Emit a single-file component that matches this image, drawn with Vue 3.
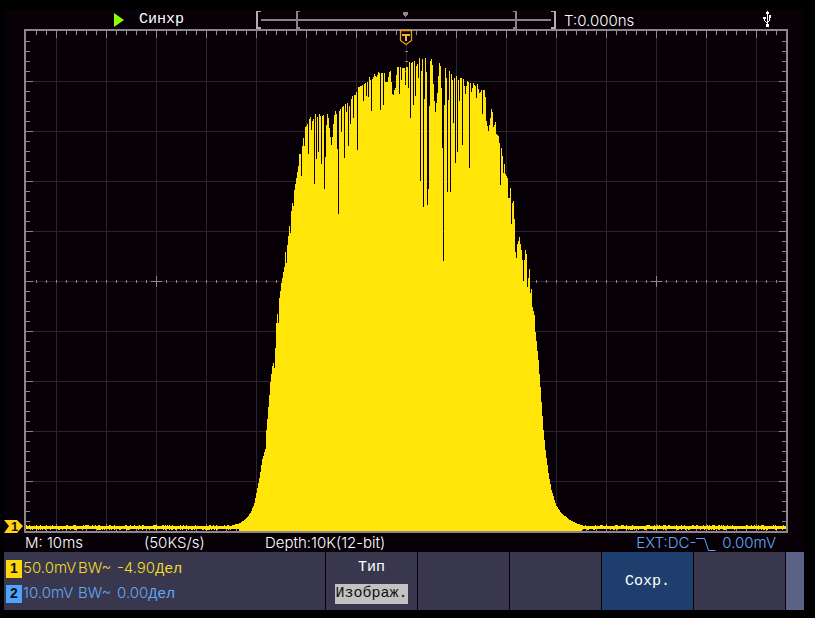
<script setup>
const envelope = [
  [232, 525], [240, 523], [246, 518], [250, 513], [254, 503], [257, 488], [259, 478], [262, 459], [265, 449],
  [266, 430], [268, 407], [270, 382], [272, 366], [273, 363], [275, 348], [276, 323], [277, 314], [279, 298],
  [281, 283], [284, 267], [285, 252], [287, 245], [289, 226], [290, 219], [292, 203], [294, 190], [296, 178],
  [298, 166], [299, 154], [301, 154], [303, 138], [305, 127], [307, 124], [310, 117], [312, 121], [315, 114],
  [317, 117], [319, 114], [321, 117], [323, 115], [324, 150], [325, 157], [326, 125], [327, 114], [328, 118],
  [330, 137], [331, 145], [332, 137], [333, 124], [334, 115], [335, 111], [337, 116], [340, 109], [343, 106],
  [345, 104], [346, 112], [347, 103], [349, 106], [352, 96], [355, 95], [358, 87], [362, 85], [365, 83],
  [367, 82], [369, 77], [371, 82], [374, 74], [376, 77], [378, 72], [380, 73], [382, 73], [384, 73], [385, 82],
  [387, 82], [389, 72], [390, 71], [391, 82], [392, 94], [394, 90], [395, 88], [396, 75], [397, 67], [400, 67],
  [403, 68], [407, 67], [409, 62], [411, 63], [414, 61], [416, 66], [417, 64], [419, 58], [421, 71], [422, 59],
  [424, 99], [425, 58], [426, 72], [429, 106], [430, 61], [431, 59], [432, 65], [433, 84], [434, 101],
  [435, 112], [436, 103], [437, 93], [438, 76], [439, 63], [440, 66], [441, 88], [442, 148], [444, 105],
  [445, 68], [446, 78], [448, 100], [449, 71], [451, 74], [452, 80], [454, 78], [456, 76], [458, 80], [460, 78],
  [463, 79], [464, 86], [465, 94], [466, 86], [467, 81], [470, 83], [471, 92], [473, 83], [475, 86], [476, 98],
  [477, 84], [479, 93], [481, 90], [484, 90], [485, 97], [486, 121], [488, 131], [490, 118], [491, 109],
  [492, 112], [493, 127], [495, 122], [496, 134], [498, 136], [499, 143], [501, 148], [502, 156], [503, 173],
  [504, 164], [505, 174], [507, 178], [508, 198], [509, 198], [510, 188], [512, 203], [513, 201], [514, 219],
  [515, 252], [516, 258], [517, 244], [519, 237], [521, 250], [522, 260], [523, 281], [524, 260], [525, 250],
  [526, 254], [527, 287], [528, 278], [529, 269], [530, 293], [531, 289], [532, 307], [534, 315], [535, 332],
  [538, 360], [540, 387], [541, 402], [543, 430], [545, 450], [548, 473], [551, 490], [556, 506], [561, 513],
  [568, 519], [578, 524], [584, 526]
]

const dropouts = {
  274: 368, 278: 323, 286: 263, 290: 233, 293: 206, 301: 176, 304: 146, 308: 154, 311: 130, 314: 184, 316: 159,
  318: 152, 321: 164, 324: 189, 337: 149, 338: 214, 341: 132, 344: 158, 348: 146, 350: 124, 353: 118, 357: 150,
  363: 101, 366: 96, 368: 97, 371: 111, 380: 110, 383: 105, 393: 95, 399: 94, 401: 80, 405: 85, 408: 88,
  410: 118, 413: 105, 415: 96, 418: 78, 420: 181, 423: 207, 427: 205, 428: 189, 443: 261, 447: 192, 450: 192,
  453: 123, 455: 163, 457: 152, 459: 101, 462: 145, 469: 168, 482: 114, 500: 185, 511: 224
}

function topAt(x) {
  if (dropouts[x]) return dropouts[x]
  for (let i = 1; i < envelope.length; i++) {
    const [x1, y1] = envelope[i]
    if (x <= x1) {
      const [x0, y0] = envelope[i - 1]
      return Math.round(y0 + ((y1 - y0) * (x - x0)) / (x1 - x0))
    }
  }
  return 526
}

let seed = 7
function noise() {
  seed = (seed * 16807) % 2147483647
  return seed / 2147483647
}

let wave = ''
for (let x = 26; x < 786; x++) {
  const burst = noise() > 0.75 ? 1 : 0
  const lift = noise() > 0.75 ? 1 : 0
  let top = 526 - lift
  let bottom = 529 + burst
  if (x >= 232 && x <= 584) {
    top = Math.min(topAt(x), top)
    bottom = x > 238 && x < 582 ? 531 : bottom
  }
  wave += `M${x} ${top}h1V${bottom}h-1z`
}

const vLines = Array.from({ length: 15 }, (_, i) => 56 + i * 50)
const hLines = Array.from({ length: 9 }, (_, i) => 81 + i * 50)
const grid = vLines.map(x => `M${x} 31h1v500h-1z`).join('') + hLines.map(y => `M26 ${y}h760v1h-760z`).join('')

let ticks = ''
for (let x = 36; x < 786; x += 10) {
  const len = (x - 56) % 50 === 0 ? 7 : 4
  ticks += `M${x} 31h1v${len}h-1zM${x} ${531 - len}h1v${len}h-1zM${x} 280h1v3h-1z`
}
for (let y = 41; y < 531; y += 10) {
  const len = (y - 31) % 50 === 0 ? 7 : 4
  ticks += `M26 ${y}h${len}v1h-${len}zM${786 - len} ${y}h${len}v1h-${len}zM405 ${y}h3v1h-3z`
}
ticks += 'M151 281h11v1h-11zM156 276h1v11h-1zM651 281h11v1h-11zM656 276h1v11h-1z'

const channels = [
  { id: 1, tone: 'yellow', scale: '50.0mV', offset: '-4.90' },
  { id: 2, tone: 'blue', scale: '10.0mV', offset: '0.00' }
]
</script>

<template>
  <div class="device">
    <main class="screen">
      <header class="topbar">
        <div class="status">
          <svg class="play" viewBox="0 0 10 14" aria-hidden="true"><path d="M0 0L10 7L0 14z" fill="#8cff00" /></svg>
          <span class="cyr">Синхр</span>
        </div>
        <svg class="memory" viewBox="256 10 300 19" aria-hidden="true" shape-rendering="crispEdges">
          <path d="M261 19h290v2h-290z" fill="#8a8289" />
          <path d="M296 11h4v1h-2v15h2v2h-4zM513 11h4v18h-4v-2h2v-15h-2z" fill="#8a8289" />
          <path d="M256 11h5v1h-3v15h3v2h-5zM556 11h-5v1h3v15h-3v2h5z" fill="#b4aeb4" />
          <path d="M403 12h5v3h-1v1h-1v1h-1v-1h-1v-1h-1z" fill="#8f888f" />
        </svg>
        <span class="time">T:0.000ns</span>
        <svg class="usb" viewBox="0 0 9 16" aria-hidden="true" shape-rendering="crispEdges">
          <path d="M4 0h1v1h1v2h-1v10h1v3h-3v-3h1v-10h-1v-2h1zM1 6h2v2h-1v2h1v1h1v1h-1v-1h-1v-1h-1v-2h-1v-2zM6 4h2v3h-1v3h-1v1h-1v-1h1v-3h0z" fill="#fff" />
        </svg>
      </header>

      <svg class="plot" viewBox="4 29 800 504" role="img" aria-label="CH1">
        <g shape-rendering="crispEdges">
          <path :d="grid" fill="#2b262c" />
          <path :d="ticks" fill="#8f898f" />
          <path d="M24 29h764v504h-764zM26 31v500h760v-500z" fill="#8d858c" fill-rule="evenodd" />
          <path :d="wave" fill="#ffe608" />
        </g>
        <path d="M400.500 30.500h11v10l-5.500 4l-5.500 -4z" fill="#080008" stroke="#e8a21c" stroke-width="1.300" />
        <path d="M402 34h8v2h-3v5h-2v-5h-3z" fill="#f2b42c" shape-rendering="crispEdges" />
        <path d="M4 520h13l6 6l-6 7h-13l5 -7z" fill="#ffd21c" />
        <text class="marker" x="11" y="531">1</text>
      </svg>

      <section class="info">
        <span>M: 10ms</span>
        <span>(50KS/s)</span>
        <span>Depth:10K(12-bit)</span>
        <span class="trigger">
          EXT:DC-<svg class="slope" viewBox="0 0 20 15" aria-hidden="true"><path d="M0 1.500h8.500l4 12h7" fill="none" stroke="#62a8f4" /></svg>
          <span>0.00mV</span>
        </span>
      </section>

      <nav class="menu">
        <div class="channels">
          <div v-for="c in channels" :key="c.id" class="channel" :class="c.tone">
            <b class="badge">{{ c.id }}</b>
            <span class="scale">{{ c.scale }}</span>
            <span>BW~</span>
            <span>{{ c.offset }}<span class="cyr">Дел</span></span>
          </div>
        </div>
        <button type="button" class="cell type cyr">
          <span>Тип</span>
          <span class="chip">Изображ.</span>
        </button>
        <button type="button" class="cell" aria-label="F2"></button>
        <button type="button" class="cell" aria-label="F3"></button>
        <button type="button" class="cell active cyr">Сохр.</button>
        <button type="button" class="cell" aria-label="F5"></button>
        <div class="edge"></div>
      </nav>
    </main>
  </div>
</template>

<style>
body {
  background: #000;
}
</style>

<style scoped>
.device {
  padding: 10px 11px 8px 4px;
  background: #000;
  color: #fff;
  font: 300 15px/18px Inter, "Liberation Sans", sans-serif;
}
.screen {
  background: #070007;
}
.cyr {
  font-family: "Liberation Mono", monospace;
  font-size: 15px;
  font-weight: 400;
}
.topbar {
  display: grid;
  grid-template-columns: 252fr 300fr 203fr 45fr;
  height: 19px;
}
.status {
  display: flex;
  align-items: center;
  gap: 15px;
  padding-left: 110px;
}
.play {
  width: 10px;
  height: 14px;
}
.memory {
  display: block;
  width: 100%;
  height: 19px;
}
.time {
  padding: 2px 0 0 8px;
}
.usb {
  width: 9px;
  height: 16px;
  margin: 1px 0 0 4px;
}
.plot {
  display: block;
  width: 100%;
}
.marker {
  font: bold 13px "Liberation Sans", sans-serif;
  fill: #1a1400;
}
.info {
  display: grid;
  grid-template-columns: 119px 121px 1fr auto;
  height: 19px;
  padding: 0 28px 0 21px;
  line-height: 20px;
}
.trigger {
  display: flex;
  color: #62a8f4;
}
.slope {
  width: 20px;
  height: 15px;
  margin: 4px 6px 0 0;
}
.menu {
  display: grid;
  grid-template-columns: 321fr repeat(5, 91fr) 18fr;
  gap: 1px;
  min-height: 58px;
}
.channels,
.cell {
  background: #39374d;
}
.channels {
  display: flex;
  flex-direction: column;
  gap: 9px;
  padding: 8px 2px;
}
.channel {
  display: grid;
  grid-template-columns: 16px 56px 39px auto;
  justify-content: start;
  height: 16px;
  line-height: 16px;
}
.scale {
  padding-left: 1px;
}
.badge {
  font: bold 14px/16px "Liberation Sans", sans-serif;
  text-align: center;
  color: #101010;
}
.yellow {
  color: #f0dc28;
}
.yellow .badge {
  background: #ffd80c;
}
.blue {
  color: #62a8f4;
}
.blue .badge {
  background: #4ca4ff;
}
.cell {
  display: flex;
  align-items: center;
  justify-content: center;
  min-width: 0;
  padding: 0;
  border: 0;
  border-radius: 0;
  color: #fff;
}
.type {
  flex-direction: column;
  gap: 6px;
  line-height: 20px;
}
.chip {
  background: #c2c2c2;
  color: #111;
}
.active {
  background: #1e3f6e;
}
.edge {
  background: #5a6285;
}
</style>
